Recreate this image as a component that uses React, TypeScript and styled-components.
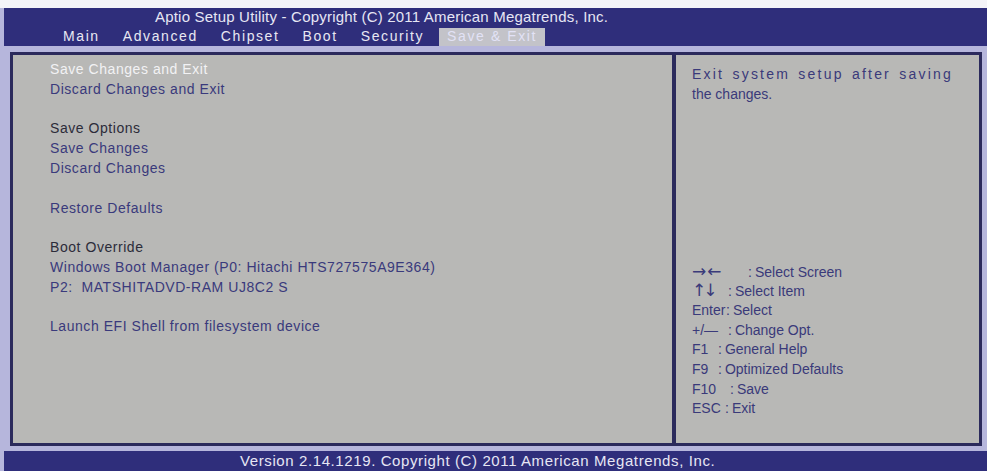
import React from 'react';
import styled, { createGlobalStyle } from 'styled-components';

const GlobalStyle = createGlobalStyle`
    html, body {
        margin: 0;
        padding: 0;
        background: #f4f4f8;
    }
    * {
        box-sizing: border-box;
    }
`;

const NAVY = '#2f2e7b';
const LAVENDER = '#b6b6dc';
const FRAME = '#2b2a5c';
const PANEL = '#b8b8b6';
const FONT = '"Liberation Sans", Arial, sans-serif';

const Screen = styled.div`
    width: 987px;
    height: 471px;
    display: flex;
    flex-direction: column;
    background: ${LAVENDER};
    border-top: 8px solid #f4f4f8;
    padding-left: 4px;
    font-family: ${FONT};
    overflow: hidden;
`;

const Header = styled.header`
    height: 38px;
    background: ${NAVY};
    display: flex;
    flex-direction: column;
`;

const Title = styled.div`
    height: 20px;
    padding-left: 151px;
    font-size: 15px;
    letter-spacing: 0.2px;
    line-height: 18px;
    color: #e6e6f4;
    white-space: nowrap;
`;

const Tabs = styled.nav`
    flex: 1;
    display: flex;
    align-items: flex-end;
    gap: 7px;
    padding-left: 51px;
`;

const Tab = styled.div<{ $active?: boolean }>`
    height: 18px;
    padding: 0 8px;
    font-size: 14px;
    letter-spacing: 1.6px;
    line-height: 17px;
    white-space: nowrap;
    color: ${({ $active }) => ($active ? '#e2e2f6' : '#e8e8f2')};
    background: ${({ $active }) => ($active ? '#c3c3c9' : 'transparent')};
`;

const Body = styled.main`
    flex: 1;
    padding: 6px 5px 5px 6px;
    display: flex;
`;

const Frame = styled.div`
    flex: 1;
    display: grid;
    grid-template-columns: 1fr 307px;
    border: 3px solid ${FRAME};
    background: ${PANEL};
`;

const MenuPanel = styled.section`
    padding: 5px 0 0 37px;
    font-size: 14px;
    letter-spacing: 0.55px;
    line-height: 19.8px;
`;

type ItemKind = 'selected' | 'item' | 'heading' | 'blank';

const itemColors: Record<ItemKind, string> = {
    selected: '#f2f2f4',
    item: '#3a3a7c',
    heading: '#2c2c3a',
    blank: 'transparent',
};

const MenuItem = styled.div<{ $kind: ItemKind }>`
    height: 19.8px;
    white-space: pre;
    color: ${({ $kind }) => itemColors[$kind]};
`;

const SidePanel = styled.aside`
    border-left: 4px solid ${FRAME};
    padding: 10px 10px 24px 16px;
    display: flex;
    flex-direction: column;
    justify-content: space-between;
    color: #3a3a7a;
    font-size: 14px;
    line-height: 19.6px;
`;

const Description = styled.p`
    margin: 0;
    width: 261px;
    text-align: justify;
    &::first-line {
        letter-spacing: 2.2px;
    }
`;

const HelpList = styled.div`
    display: flex;
    flex-direction: column;
`;

const HelpRow = styled.div`
    height: 19.7px;
    white-space: nowrap;
    display: flex;
    align-items: baseline;
`;

const HelpKey = styled.span<{ $width: number; $arrow?: number }>`
    width: ${({ $width }) => $width}px;
    ${({ $arrow }) =>
        $arrow !== undefined &&
        `
        font-family: "DejaVu Sans", sans-serif;
        font-size: 17px;
        line-height: 19px;
        letter-spacing: ${$arrow}px;
    `}
`;

const HelpLabel = styled.span`
    margin-left: 3px;
`;

const Footer = styled.footer`
    height: 20px;
    background: ${NAVY};
    padding-left: 236px;
    font-size: 15px;
    letter-spacing: 0.6px;
    line-height: 19px;
    color: #e6e6f4;
    white-space: nowrap;
`;

const tabs = ['Main', 'Advanced', 'Chipset', 'Boot', 'Security', 'Save & Exit'];

const menu: { kind: ItemKind; text: string }[] = [
    { kind: 'selected', text: 'Save Changes and Exit' },
    { kind: 'item', text: 'Discard Changes and Exit' },
    { kind: 'blank', text: '' },
    { kind: 'heading', text: 'Save Options' },
    { kind: 'item', text: 'Save Changes' },
    { kind: 'item', text: 'Discard Changes' },
    { kind: 'blank', text: '' },
    { kind: 'item', text: 'Restore Defaults' },
    { kind: 'blank', text: '' },
    { kind: 'heading', text: 'Boot Override' },
    { kind: 'item', text: 'Windows Boot Manager (P0: Hitachi HTS727575A9E364)' },
    { kind: 'item', text: 'P2:  MATSHITADVD-RAM UJ8C2 S' },
    { kind: 'blank', text: '' },
    { kind: 'item', text: 'Launch EFI Shell from filesystem device' },
];

// width = distance from the key's left edge to the colon; arrow = letter spacing of arrow glyphs
const help: { key: string; width: number; arrow?: number; label: string }[] = [
    { key: '→←', width: 56, arrow: 1, label: 'Select Screen' },
    { key: '↑↓', width: 36, arrow: -3, label: 'Select Item' },
    { key: 'Enter', width: 34, label: 'Select' },
    { key: '+/—', width: 36, label: 'Change Opt.' },
    { key: 'F1', width: 26, label: 'General Help' },
    { key: 'F9', width: 26, label: 'Optimized Defaults' },
    { key: 'F10', width: 38, label: 'Save' },
    { key: 'ESC', width: 33, label: 'Exit' },
];

const App: React.FC = () => {
    return (
        <>
            <GlobalStyle />
            <Screen>
                <Header>
                    <Title>Aptio Setup Utility - Copyright (C) 2011 American Megatrends, Inc.</Title>
                    <Tabs>
                        {tabs.map((t) => (
                            <Tab key={t} $active={t === 'Save & Exit'}>
                                {t}
                            </Tab>
                        ))}
                    </Tabs>
                </Header>
                <Body>
                    <Frame>
                        <MenuPanel>
                            {menu.map((m, i) => (
                                <MenuItem key={i} $kind={m.kind}>
                                    {m.text}
                                </MenuItem>
                            ))}
                        </MenuPanel>
                        <SidePanel>
                            <Description>Exit system setup after saving the changes.</Description>
                            <HelpList>
                                {help.map((h) => (
                                    <HelpRow key={h.key}>
                                        <HelpKey $width={h.width} $arrow={h.arrow}>
                                            {h.key}
                                        </HelpKey>
                                        :<HelpLabel>{h.label}</HelpLabel>
                                    </HelpRow>
                                ))}
                            </HelpList>
                        </SidePanel>
                    </Frame>
                </Body>
                <Footer>Version 2.14.1219. Copyright (C) 2011 American Megatrends, Inc.</Footer>
            </Screen>
        </>
    );
};

export default App;
